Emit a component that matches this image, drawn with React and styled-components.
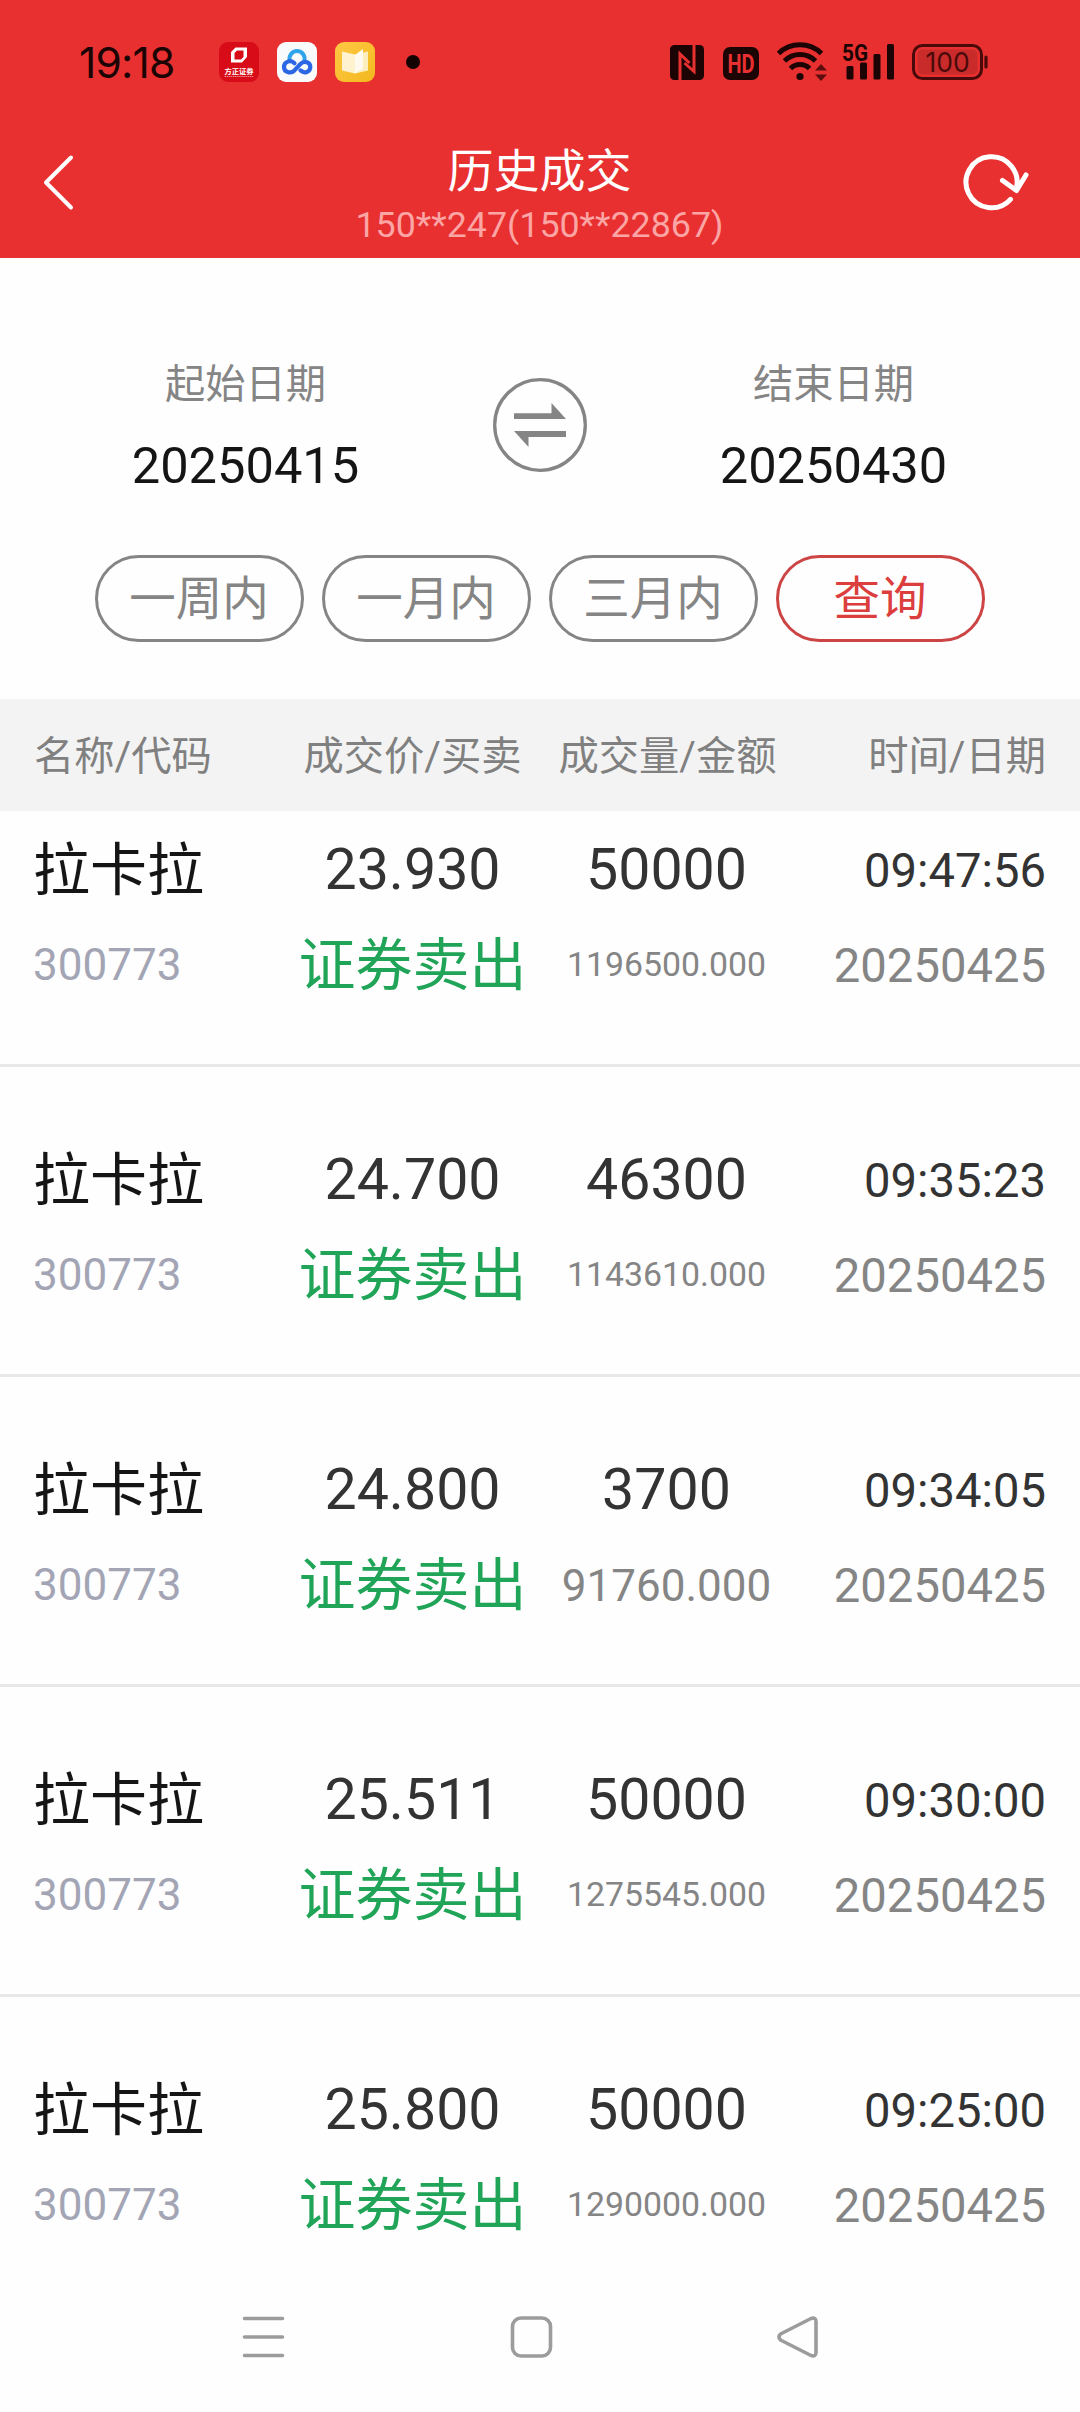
import React from 'react';
import styled, { createGlobalStyle } from 'styled-components';

const GlobalStyle = createGlobalStyle`
    * {
        box-sizing: border-box;
    }
    body {
        margin: 0;
        background: #fefefe;
        font-family: Roboto, 'Noto Sans CJK SC', sans-serif;
    }
    svg {
        overflow: visible;
    }
`;

const Screen = styled.div`
    width: 1080px;
    height: 2412px;
    display: flex;
    flex-direction: column;
    overflow: hidden;
    background: #fefefe;
`;

const Top = styled.header`
    height: 258px;
    flex: none;
    background: #e83030;
`;

const StatusBar = styled.div`
    height: 124px;
    padding: 0 92px 0 79px;
    display: flex;
    align-items: center;
    justify-content: space-between;
`;

const StatusGroup = styled.div`
    display: flex;
    align-items: center;
    gap: 18px;
`;

const Clock = styled.span`
    width: 122px;
    font-family: Inter, sans-serif;
    font-size: 42.5px;
    letter-spacing: -0.8px;
    line-height: 52px;
    padding-top: 2px;
    color: #1c0404;
`;

const Dot = styled.span`
    width: 14px;
    height: 14px;
    margin-left: 13px;
    border-radius: 50%;
    background: #140202;
`;

const TitleBar = styled.div`
    height: 134px;
    padding: 0 52px 0 40px;
    display: grid;
    grid-template-columns: 70px 1fr 70px;
    align-items: start;
`;

const BackIcon = styled.svg`
    width: 36px;
    height: 60px;
    margin-top: 28px;
`;

const RefreshIcon = styled.svg`
    width: 68px;
    height: 60px;
    margin-top: 28px;
    justify-self: end;
`;

const TitleText = styled.div`
    display: flex;
    flex-direction: column;
    align-items: center;
    margin-left: 11px;
`;

const Title = styled.h1`
    margin: 17px 0 0;
    font-size: 46px;
    font-weight: 400;
    line-height: 60px;
    color: #fff;
`;

const Account = styled.span`
    font-size: 35.8px;
    line-height: 48px;
    color: #fba5a5;
`;

const Filter = styled.section`
    height: 441px;
    flex: none;
    padding-top: 92px;
`;

const DateRow = styled.div`
    display: grid;
    grid-template-columns: 493px 94px 493px;
`;

const DateField = styled.div`
    display: flex;
    flex-direction: column;
    align-items: center;
    padding-right: ${(props) => (props.$start ? 2 : 0)}px;
`;

const DateLabel = styled.span`
    font-size: 40.3px;
    line-height: 70px;
    color: #858585;
`;

const DateValue = styled.span`
    font-size: 50.6px;
    line-height: 92px;
    color: #151515;
`;

const SwapIcon = styled.svg`
    width: 94px;
    height: 94px;
    margin-top: 28px;
`;

const Pills = styled.div`
    display: flex;
    justify-content: center;
    gap: 18px;
    margin-top: 43px;
`;

const Pill = styled.button`
    width: 209px;
    height: 87px;
    padding: 0 1px 0 0;
    border: 3px solid ${(props) => (props.$active ? '#cc4444' : '#858585')};
    border-radius: 44px;
    background: none;
    font-family: inherit;
    font-size: 46.5px;
    line-height: 80px;
    color: ${(props) => (props.$active ? '#dc3e3e' : '#858585')};
`;

const TableHead = styled.div`
    height: 112px;
    flex: none;
    padding-bottom: 5px;
    display: grid;
    grid-template-columns: 285px 255px 255px 285px;
    align-items: center;
    background: #f3f3f3;
    font-size: 40.3px;
    color: #808080;
`;

const HeadCell = styled.span`
    text-align: ${(props) => props.$align || 'center'};
    padding: 0 34px;
    margin: 0 ${(props) => (props.$align ? 0 : '-35px')};
    white-space: nowrap;
`;

const List = styled.main`
    height: 1451px;
    flex: none;
    overflow: hidden;
`;

// the list is scrolled a little, so the first row starts under the head
const Scroll = styled.div`
    margin-top: -54.4px;
`;

const Row = styled.div`
    height: 310.15px;
    padding: 65px 34px 0 33px;
    display: grid;
    grid-template-columns: 252px 255px 253px 253px;
    grid-template-rows: 95px 95px;
    border-bottom: 3px solid #e8e8e8;
`;

const Cell = styled.span`
    font-size: ${(props) => props.$size}px;
    line-height: 95px;
    color: ${(props) => props.$color};
    text-align: ${(props) => props.$align || 'center'};
    padding-top: ${(props) => props.$drop || 0}px;
    white-space: nowrap;
`;

const NavBar = styled.nav`
    height: 150px;
    display: flex;
    align-items: center;
    padding: 0 261px 0 242px;
    justify-content: space-between;
    background: #fefefe;
`;

const NavIcon = styled.svg`
    width: 42px;
    height: 42px;
    fill: none;
    stroke: #9c9c9c;
    stroke-width: 3.6;
    stroke-linecap: round;
    stroke-linejoin: round;
`;

const trades = [
    { price: '23.930', amount: '50000', total: '1196500.000', time: '09:47:56' },
    { price: '24.700', amount: '46300', total: '1143610.000', time: '09:35:23' },
    { price: '24.800', amount: '3700', total: '91760.000', time: '09:34:05' },
    { price: '25.511', amount: '50000', total: '1275545.000', time: '09:30:00' },
    { price: '25.800', amount: '50000', total: '1290000.000', time: '09:25:00' },
];

function AppIcons() {
    return (
        <>
            <svg width="40" height="40" viewBox="0 0 40 40">
                <rect width="40" height="40" rx="9" fill="#d80c18" />
                <path
                    fill="#fff"
                    fillRule="evenodd"
                    d="M16.500 5.500H28V15l-5 5.500H12V10zM18 8.500l-2.500 2.500v6.500H22l2.500-2.500V8.500z"
                />
                <text
                    x="20"
                    y="31.500"
                    fontSize="7.300"
                    fontWeight="700"
                    textAnchor="middle"
                    fill="#fff"
                >
                    方正证券
                </text>
                <path d="M5.500 34.500h29" stroke="#f0888c" strokeWidth="1.200" strokeDasharray="1.500 .6" />
            </svg>
            <svg width="40" height="40" viewBox="0 0 40 40" fill="none">
                <rect width="40" height="40" rx="9" fill="#f8fafc" />
                <path d="M12.800 18.500a7.500 7.500 0 1 1 14.500 0" stroke="#2fa4ea" strokeWidth="4" />
                <path
                    d="M17.500 21.200c-4-4-10.500-1.500-10.500 3.700s6.500 7.500 10.500 3.500l6-6.500c4-3.800 9.800-1.500 9.800 3.200s-5.800 7-9.800 3.300"
                    stroke="#2b66e4"
                    strokeWidth="4.200"
                    strokeLinecap="round"
                />
            </svg>
            <svg width="40" height="40" viewBox="0 0 40 40">
                <defs>
                    <linearGradient id="book" x1="0" y1="0" x2="1" y2="1">
                        <stop offset="0" stopColor="#ffc845" />
                        <stop offset="1" stopColor="#f3b81d" />
                    </linearGradient>
                </defs>
                <rect width="40" height="40" rx="9" fill="url(#book)" />
                <path fill="#fff3cf" d="M7 9.500l13 3V31.500L7 28.500z" />
                <path fill="#fdeebd" d="M20 12.500L33 9.500v19l-13 3z" />
                <path fill="#fffaf0" d="M20 13l8-6v19.500l-8 5z" />
            </svg>
        </>
    );
}

function SystemIcons() {
    return (
        <>
            <svg width="34" height="35" viewBox="0 0 34 35">
                <rect width="34" height="35" rx="4.500" fill="#1c0404" />
                <path
                    d="M10 35V9l9.500 9M24 0v26.500L14.500 18"
                    fill="none"
                    stroke="#e83030"
                    strokeWidth="3"
                />
            </svg>
            <svg width="36" height="33" viewBox="-1 -1 36 33">
                <rect width="36" height="33" rx="7" fill="#1c0404" />
                <text
                    x="4.500"
                    y="25.500"
                    fontSize="25"
                    fontWeight="700"
                    textLength="27"
                    lengthAdjust="spacingAndGlyphs"
                    fill="#e83030"
                >
                    HD
                </text>
            </svg>
            <svg width="48" height="40" viewBox="-1 1 48 40">
                <g fill="none" stroke="#1c0404" strokeWidth="5">
                    <path d="M1.500 12.500a31 31 0 0 1 43 0" />
                    <path d="M7.500 20a22 22 0 0 1 31 0" />
                    <path d="M13.500 27.500a13.500 13.500 0 0 1 19 0" />
                </g>
                <circle cx="23" cy="35.500" r="3.600" fill="#1c0404" />
                <path d="M38 29.500l6-6.500 6 6.500zM38 33.500l6 6.500 6-6.500z" fill="#5c0d0d" />
            </svg>
            <svg width="52" height="38" viewBox="0 1 52 38">
                <text
                    x="0"
                    y="18.500"
                    fontSize="24.500"
                    fontWeight="700"
                    textLength="26"
                    lengthAdjust="spacingAndGlyphs"
                    fill="#1c0404"
                >
                    5G
                </text>
                <g fill="#1c0404">
                    <rect x="4.500" y="24" width="7" height="13.500" rx="1.500" />
                    <rect x="18" y="20.500" width="7" height="17" rx="1.500" />
                    <rect x="31.500" y="12" width="7" height="25.500" rx="1.500" />
                    <rect x="45" y="2" width="7" height="35.500" rx="1.500" />
                </g>
            </svg>
            <svg width="76" height="36" viewBox="0 0 76 36">
                <rect x="1.500" y="1.500" width="68" height="33" rx="9" fill="none" stroke="#4a0a0a" strokeWidth="3" />
                <rect x="5.500" y="5.500" width="60" height="25" rx="5" fill="#c92a2a" />
                <path d="M74 13v10" stroke="#4a0a0a" strokeWidth="3.200" strokeLinecap="round" />
                <text
                    x="35.500"
                    y="27.500"
                    fontFamily="Inter"
                    fontSize="26.500"
                    textAnchor="middle"
                    fill="#4a0a0a"
                >
                    100
                </text>
            </svg>
        </>
    );
}

function Header() {
    return (
        <Top>
            <StatusBar>
                <StatusGroup>
                    <Clock>19:18</Clock>
                    <AppIcons />
                    <Dot />
                </StatusGroup>
                <StatusGroup>
                    <SystemIcons />
                </StatusGroup>
            </StatusBar>
            <TitleBar>
                <BackIcon viewBox="0 0 36 60">
                    <path
                        d="M31 5.500L6 30.500l25 25"
                        fill="none"
                        stroke="#fff"
                        strokeWidth="4"
                        strokeLinecap="round"
                        strokeLinejoin="round"
                    />
                </BackIcon>
                <TitleText>
                    <Title>历史成交</Title>
                    <Account>150**247(150**22867)</Account>
                </TitleText>
                <RefreshIcon viewBox="0 0 68 60">
                    <path
                        d="M50.500 47.300A25.500 25.500 0 1 1 56 37.500M42.500 28.500l14 10L66 23"
                        fill="none"
                        stroke="#fff"
                        strokeWidth="5"
                        strokeLinecap="round"
                        strokeLinejoin="round"
                    />
                </RefreshIcon>
            </TitleBar>
        </Top>
    );
}

function App() {
    return (
        <Screen>
            <GlobalStyle />
            <Header />

            <Filter>
                <DateRow>
                    <DateField $start>
                        <DateLabel>起始日期</DateLabel>
                        <DateValue>20250415</DateValue>
                    </DateField>
                    <SwapIcon viewBox="0 0 94 94">
                        <circle cx="47" cy="47" r="45.300" fill="none" stroke="#858585" strokeWidth="3.300" />
                        <path
                            fill="#858585"
                            d="M21 35.300h37.500V25L73 41H21zM73 58.900H35.500V69L21 53h52z"
                        />
                    </SwapIcon>
                    <DateField>
                        <DateLabel>结束日期</DateLabel>
                        <DateValue>20250430</DateValue>
                    </DateField>
                </DateRow>
                <Pills>
                    <Pill>一周内</Pill>
                    <Pill>一月内</Pill>
                    <Pill>三月内</Pill>
                    <Pill $active>查询</Pill>
                </Pills>
            </Filter>

            <TableHead>
                <HeadCell $align="left">名称/代码</HeadCell>
                <HeadCell>成交价/买卖</HeadCell>
                <HeadCell>成交量/金额</HeadCell>
                <HeadCell $align="right">时间/日期</HeadCell>
            </TableHead>

            <List>
                <Scroll>
                    {trades.map((trade) => (
                        <Row key={trade.time}>
                            <Cell $size={57} $color="#151515" $align="left" $drop={1}>
                                拉卡拉
                            </Cell>
                            <Cell $size={57.3} $color="#333">
                                {trade.price}
                            </Cell>
                            <Cell $size={57.3} $color="#333">
                                {trade.amount}
                            </Cell>
                            <Cell $size={47.2} $color="#333" $align="right" $drop={2}>
                                {trade.time}
                            </Cell>
                            <Cell $size={44} $color="#a3a5b5" $align="left" $drop={1}>
                                300773
                            </Cell>
                            <Cell $size={57} $color="#20a457" $drop={1}>
                                证券卖出
                            </Cell>
                            {/* long totals get a smaller font to fit the column */}
                            <Cell
                                $size={trade.total.length > 9 ? 33.8 : 44}
                                $color="#858585"
                                $drop={trade.total.length > 9 ? 0 : 2}
                            >
                                {trade.total}
                            </Cell>
                            <Cell $size={47.2} $color="#858585" $align="right" $drop={2}>
                                20250425
                            </Cell>
                        </Row>
                    ))}
                </Scroll>
            </List>

            <NavBar>
                <NavIcon viewBox="0 0 42 42">
                    <path d="M2.500 2.500h38M2.500 21h38M2.500 39.500h38" />
                </NavIcon>
                <NavIcon viewBox="0 0 42 42">
                    <rect x="2.500" y="2" width="38" height="38" rx="8.500" />
                </NavIcon>
                <NavIcon viewBox="0 0 42 42">
                    <path d="M3.500 18L34 2.500q5-1.500 5 3v31q0 4.500-5 3L3.500 24q-3-3 0-6z" />
                </NavIcon>
            </NavBar>
        </Screen>
    );
}

export default App;
